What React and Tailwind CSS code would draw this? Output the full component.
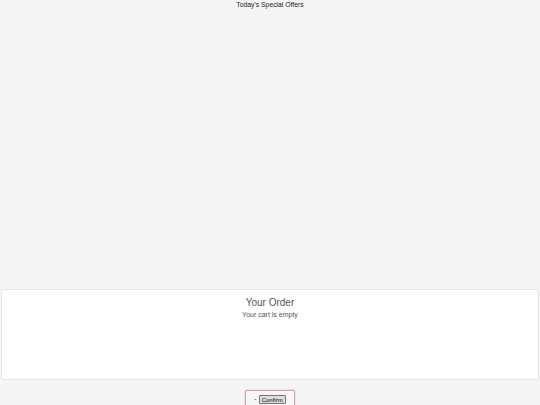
import React from 'react';

const App = () => {
    return (
        <div className="bg-[#f5f5f5] font-['Liberation_Sans',Arial,sans-serif] text-[#333] overflow-hidden h-[405px]">
            {/* Offers */}
            <div className="h-[289px]">
                <h1 className="text-center text-[6.8px] leading-[8px] pt-[1px] text-[#222]">Today's Special Offers</h1>
            </div>

            {/* Order card */}
            <div className="mx-[1px] h-[91px] bg-white border border-[#e6e6e6] rounded-[3px] flex flex-col items-center pt-[7px]">
                <h2 className="text-[10px] leading-[12px] text-[#555]">Your Order</h2>
                <p className="text-[7px] leading-[9px] text-[#555] mt-[1px]">Your cart is empty</p>
            </div>

            {/* Confirm box */}
            <div className="flex justify-center mt-[10px]">
                <div className="w-[50px] h-[24px] shrink-0 border border-[#d9a3aa] rounded-[2px] shadow-[0_0_2px_rgba(200,80,100,0.4)] bg-[#f7f7f7] flex items-start justify-center gap-[2px] pt-[4px]">
                    <span className="text-[7px] leading-[8px]">-</span>
                    <button className="text-[6px] leading-[6px] px-[2px] py-[0.5px] border border-[#767676] bg-[#dedede] text-black rounded-[1px]">Confirm</button>
                </div>
            </div>
        </div>
    );
};

export default App;
